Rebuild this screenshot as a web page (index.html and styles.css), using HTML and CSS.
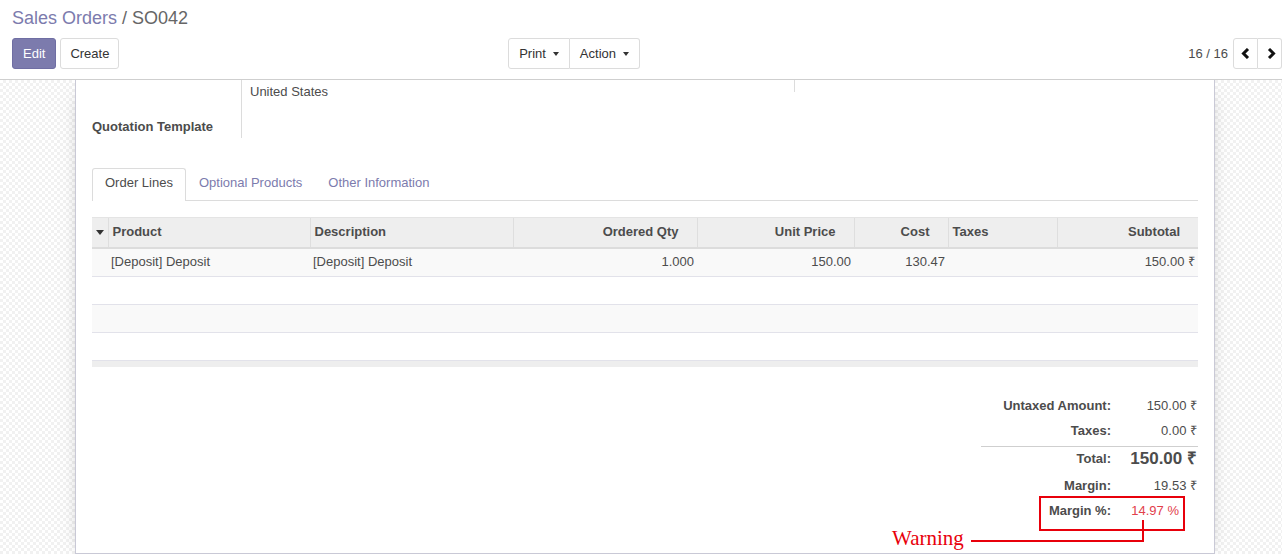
FILE: index.html
```html
<!DOCTYPE html>
<html>
<head>
<meta charset="utf-8">
<link rel="stylesheet" href="styles.css">
</head>
<body>
<div class="cp">
  <div class="breadcrumb"><span class="bc-link">Sales Orders</span><span class="bc-sep"> / </span><span class="bc-cur">SO042</span></div>
  <div class="cp-row">
    <div class="cp-left">
      <div class="btns">
        <button class="btn btn-primary">Edit</button>
        <button class="btn btn-default">Create</button>
      </div>
      <div class="btn-group">
        <button class="btn btn-default btn-dd">Print <span class="caret"></span></button>
        <button class="btn btn-default btn-dd">Action <span class="caret"></span></button>
      </div>
    </div>
    <div class="cp-right">
      <span class="pager-val">16 / 16</span>
      <div class="btn-group">
        <button class="btn btn-default btn-pg"><svg width="9" height="11" viewBox="0 0 9 11"><path d="M7 1 L2.5 5.5 L7 10" fill="none" stroke="#111" stroke-width="3"/></svg></button>
        <button class="btn btn-default btn-pg btn-last"><svg width="9" height="11" viewBox="0 0 9 11"><path d="M2 1 L6.5 5.5 L2 10" fill="none" stroke="#111" stroke-width="3"/></svg></button>
      </div>
    </div>
  </div>
</div>
<div class="content">
  <div class="sheet">
    <div class="groups">
      <div class="group group-left">
        <div class="g-label g-r1"></div>
        <div class="g-value g-r1">United States</div>
        <div class="g-label g-r2">Quotation Template</div>
        <div class="g-value g-r2"></div>
      </div>
      <div class="group group-right">
        <div class="g-label g-r0"></div>
        <div class="g-value g-r0"></div>
      </div>
    </div>

    <ul class="tabs">
      <li class="tab active">Order Lines</li>
      <li class="tab">Optional Products</li>
      <li class="tab">Other Information</li>
    </ul>

    <table class="lines">
      <colgroup>
        <col class="c0"><col class="c1"><col class="c2"><col class="c3"><col class="c4"><col class="c5"><col class="c6"><col class="c7">
      </colgroup>
      <thead>
        <tr>
          <th class="th-caret"><span class="tri"></span></th>
          <th>Product</th>
          <th>Description</th>
          <th class="num">Ordered Qty</th>
          <th class="num">Unit Price</th>
          <th class="num">Cost</th>
          <th>Taxes</th>
          <th class="num">Subtotal</th>
        </tr>
      </thead>
      <tbody>
        <tr class="odd data">
          <td></td>
          <td>[Deposit] Deposit</td>
          <td>[Deposit] Deposit</td>
          <td class="num">1.000</td>
          <td class="num">150.00</td>
          <td class="num">130.47</td>
          <td></td>
          <td class="num">150.00 ₹</td>
        </tr>
        <tr><td colspan="8"></td></tr>
        <tr class="odd"><td colspan="8"></td></tr>
        <tr><td colspan="8"></td></tr>
      </tbody>
      <tfoot>
        <tr><td colspan="8"></td></tr>
      </tfoot>
    </table>

    <div class="totals">
      <div class="t-row"><span class="t-label">Untaxed Amount:</span><span class="t-val">150.00 ₹</span></div>
      <div class="t-row"><span class="t-label">Taxes:</span><span class="t-val">0.00 ₹</span></div>
      <div class="t-row t-total"><span class="t-label">Total:</span><span class="t-val t-big">150.00 ₹</span></div>
      <div class="t-row"><span class="t-label">Margin:</span><span class="t-val">19.53 ₹</span></div>
      <div class="t-row"><span class="t-label">Margin %:</span><span class="t-val t-pct">14.97 %</span></div>
    </div>

    <div class="ann-box"></div>
    <div class="ann-vline"></div>
    <div class="ann-hline"></div>
    <div class="ann-text">Warning</div>
  </div>
</div>
</body>
</html>
```

FILE: styles.css
```css
html, body {
  margin: 0;
  padding: 0;
}
body {
  font-family: "Liberation Sans", Arial, sans-serif;
  font-size: 13px;
  color: #4c4c4c;
  height: 554px;
  overflow: hidden;
  background: #fff;
}

/* control panel */
.cp {
  height: 79px;
  border-bottom: 1px solid #cfcfcf;
  background: #fff;
}
.breadcrumb {
  padding: 5px 0 0 12px;
  height: 28px;
  font-size: 18px;
  line-height: 26px;
}
.bc-link { color: #7c7bad; }
.bc-sep, .bc-cur { color: #666; }

.cp-row {
  display: flex;
  margin-top: 5px;
}
.cp-left {
  width: 50%;
  box-sizing: border-box;
  padding-left: 12px;
  padding-right: 1px;
  display: flex;
  justify-content: space-between;
}
.cp-right {
  width: 50%;
  display: flex;
  justify-content: flex-end;
  align-items: center;
}
.btns {
  display: flex;
  gap: 4px;
}
.btn {
  font-family: "Liberation Sans", Arial, sans-serif;
  font-size: 13px;
  height: 31px;
  padding: 0 9px;
  border-radius: 3px;
  border: 1px solid #dcdcdc;
  background: #fff;
  color: #333;
  display: inline-flex;
  align-items: center;
  margin: 0;
}
.btn-primary {
  background: #7c7bad;
  border-color: #6f6ea3;
  color: #fff;
  padding: 0 10px;
}
.btn-group {
  display: flex;
}
.btn-group .btn {
  border-radius: 0;
}
.btn-group .btn:first-child {
  border-radius: 3px 0 0 3px;
}
.btn-group .btn:last-child {
  border-radius: 0 3px 3px 0;
  border-left: none;
}
.btn-dd {
  padding: 0 10px;
}
.caret {
  display: inline-block;
  width: 0;
  height: 0;
  margin-left: 7px;
  border-left: 3.5px solid transparent;
  border-right: 3.5px solid transparent;
  border-top: 4px solid #333;
}
.pager-val {
  color: #4c4c4c;
  margin-right: 5px;
}
.btn-pg {
  width: 25px;
  padding: 0;
  justify-content: center;
}
.btn-last {
  width: 24px;
  padding-left: 4px;
}

/* content */
.content {
  height: 474px;
  overflow: hidden;
  padding-left: 75px;
  background-color: #fff;
  background-image: repeating-conic-gradient(#f1f1f1 0% 25%, #ffffff 0% 50%);
  background-size: 6px 6px;
}
.sheet {
  position: relative;
  width: 1140px;
  box-sizing: border-box;
  background: #fff;
  border: 1px solid #c9c9d6;
  border-top: none;
  padding: 0 16px 30px 16px;
  box-shadow: 0 5px 20px -12px rgba(0, 0, 0, 0.6);
}

/* groups */
.groups {
  display: flex;
}
.group {
  display: grid;
  grid-template-columns: 150px 1fr;
  align-content: start;
}
.group-left { width: 553px; }
.group-right { flex: 1; }
.g-label {
  border-right: 1px solid #dcdcdc;
  font-weight: bold;
  line-height: 18px;
}
.g-value {
  padding-left: 8px;
  line-height: 18px;
}
.g-r0 { height: 12px; }
.g-r1 { height: 24px; box-sizing: border-box; padding-top: 3px; }
.g-r2 { height: 34px; box-sizing: border-box; padding-top: 14px; }

/* tabs */
.tabs {
  list-style: none;
  margin: 30px 0 0 0;
  padding: 0;
  display: flex;
  border-bottom: 1px solid #dcdcdc;
}
.tab {
  height: 28px;
  line-height: 28px;
  padding: 0 12px 3px 12px;
  border: 1px solid transparent;
  border-bottom: none;
  margin-bottom: -1px;
  color: #7c7bad;
  border-radius: 3px 3px 0 0;
}
.tab.active {
  color: #4c4c4c;
  background: #fff;
  border-color: #dcdcdc;
  padding-bottom: 4px;
}

/* lines table */
.lines {
  margin-top: 16px;
  width: 100%;
  border-collapse: collapse;
  table-layout: fixed;
}
.c0 { width: 16px; }
.c1 { width: 202px; }
.c2 { width: 203px; }
.c3 { width: 184px; }
.c4 { width: 157px; }
.c5 { width: 94px; }
.c6 { width: 109px; }
.c7 { width: 141px; }
.lines th {
  background: #eeeeee;
  height: 26px;
  padding: 0 4px 3px 4px;
  text-align: left;
  font-weight: bold;
  border-top: 1px solid #e4e4e4;
  border-left: 1px solid #dedede;
  border-bottom: 2px solid #dcdcdc;
  white-space: nowrap;
}
.lines th:first-child { border-left: none; }
.lines th.th-caret {
  padding: 0 0 2px 0;
  text-align: center;
}
.lines th.num {
  text-align: right;
  padding-right: 18px;
}
.tri {
  display: inline-block;
  width: 0;
  height: 0;
  border-left: 4px solid transparent;
  border-right: 4px solid transparent;
  border-top: 5px solid #333;
  vertical-align: middle;
}
.lines td {
  height: 27px;
  padding: 0 3px;
  border-bottom: 1px solid #e2e2ea;
  white-space: nowrap;
}
.lines tr.data td {
  height: 24px;
  padding-bottom: 3px;
}
.lines td.num {
  text-align: right;
}
.lines tbody tr.odd td {
  background: #f9f9f9;
}
.lines tfoot td {
  height: 6px;
  padding: 0;
  background: #eeeeee;
  border-top: 1px solid #e2e2e2;
  border-bottom: none;
}

/* totals */
.totals {
  margin: 26px 0 0 auto;
  width: 217px;
  display: flex;
  flex-direction: column;
}
.t-row {
  display: flex;
  height: 25px;
  line-height: 25px;
  white-space: nowrap;
}
.t-label {
  width: 130px;
  text-align: right;
  font-weight: bold;
}
.t-val {
  width: 87px;
  box-sizing: border-box;
  text-align: right;
  padding-right: 1px;
}
.t-total {
  margin-top: 3px;
  border-top: 1px solid #cfcfcf;
  height: 24px;
  line-height: 24px;
  padding-bottom: 2px;
}
.t-big {
  font-size: 17px;
  font-weight: bold;
}
.t-pct {
  color: #e2404b;
  padding-right: 19px;
}

/* annotation */
.ann-box {
  position: absolute;
  left: 963px;
  top: 416px;
  width: 142px;
  height: 31px;
  border: 2px solid #e8000b;
}
.ann-vline {
  position: absolute;
  left: 1066px;
  top: 440px;
  width: 2px;
  height: 22px;
  background: #e8000b;
}
.ann-hline {
  position: absolute;
  left: 895px;
  top: 460px;
  width: 173px;
  height: 2px;
  background: #e8000b;
}
.ann-text {
  position: absolute;
  left: 816px;
  top: 446px;
  font-family: "Liberation Serif", "Times New Roman", serif;
  font-size: 21px;
  line-height: 24px;
  color: #e8000b;
}
```
